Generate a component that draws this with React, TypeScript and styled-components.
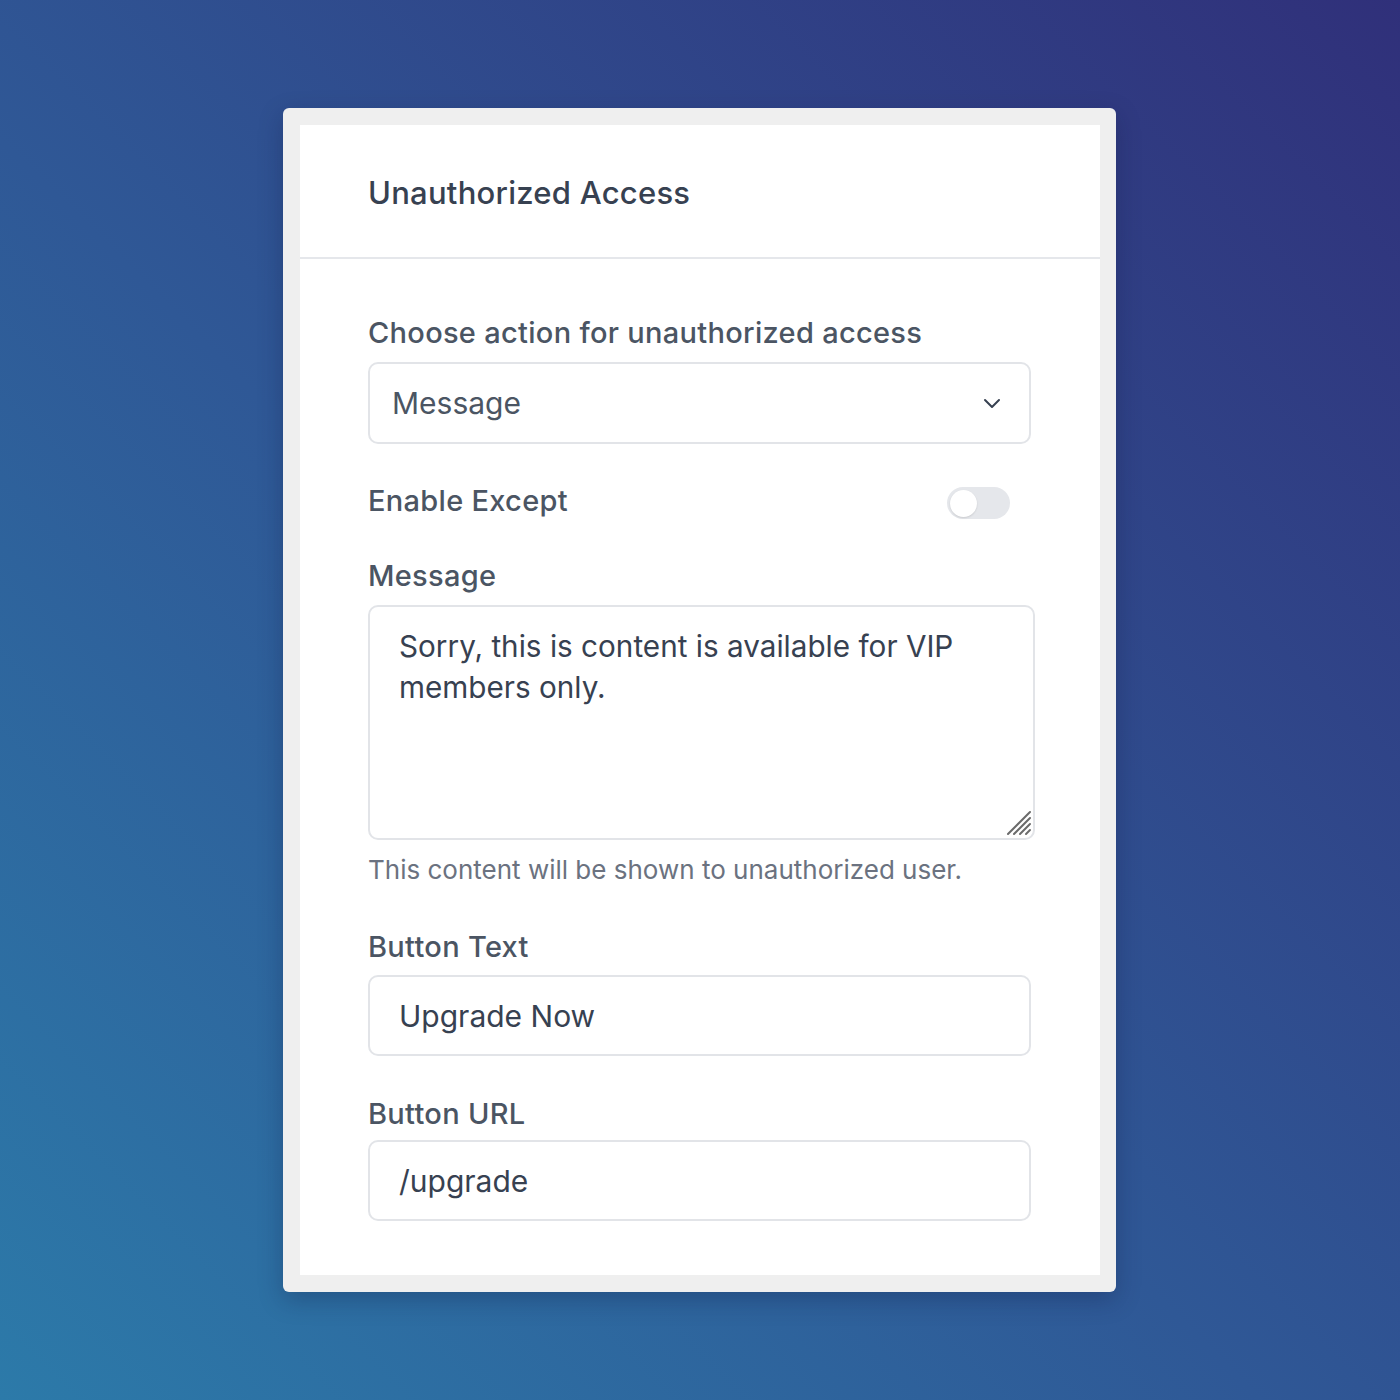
import type { FC } from "react";
import styled, { createGlobalStyle } from "styled-components";

const GlobalStyle = createGlobalStyle`
  html, body {
    margin: 0;
    padding: 0;
  }

  body {
    font-family: Inter, "Noto Sans", sans-serif;
    -webkit-font-smoothing: antialiased;
  }
`;

const Page = styled.div`
  width: 1400px;
  height: 1400px;
  box-sizing: border-box;
  padding-top: 108px;
  display: flex;
  justify-content: center;
  align-items: flex-start;
  background: linear-gradient(45deg, #2c7aa9 0%, #2f5896 45%, #30307a 100%);
`;

const Frame = styled.div`
  width: 833px;
  box-sizing: border-box;
  margin-left: -1px;
  padding: 17px 16px 17px 17px;
  background: #efefef;
  border-radius: 6px;
  box-shadow: 0 8px 24px rgba(15, 20, 60, 0.28);
`;

const Card = styled.div`
  background: #ffffff;
`;

const Header = styled.div`
  height: 134px;
  box-sizing: border-box;
  padding-left: 68px;
  padding-top: 2px;
  display: flex;
  align-items: center;
  border-bottom: 2px solid #e5e7eb;
`;

const Title = styled.h2`
  margin: 0;
  font-size: 31px;
  font-weight: 500;
  color: #374151;
  letter-spacing: 0.25px;
`;

const Body = styled.div`
  padding: 56px 69px 54px 68px;
  display: flex;
  flex-direction: column;
  gap: 39px;
`;

const Field = styled.div<{ $gap?: number; $top?: number }>`
  display: flex;
  flex-direction: column;
  gap: ${({ $gap }) => $gap ?? 11}px;
  margin-top: ${({ $top }) => $top ?? 0}px;
`;

const Label = styled.label`
  font-size: 29px;
  line-height: 36px;
  font-weight: 500;
  letter-spacing: 0.3px;
  color: #4b5563;
`;

const Select = styled.div`
  width: 663px;
  height: 82px;
  box-sizing: border-box;
  padding: 0 28px 0 22px;
  display: flex;
  align-items: center;
  justify-content: space-between;
  border: 2px solid #e2e4e8;
  border-radius: 10px;
  font-size: 30px;
  color: #4b5563;
`;

const ToggleRow = styled.div`
  height: 36px;
  display: flex;
  align-items: center;
  justify-content: space-between;
  padding-right: 21px;
`;

const Toggle = styled.div<{ $on?: boolean }>`
  width: 63px;
  height: 32px;
  margin-top: 4px;
  border-radius: 16px;
  background: ${({ $on }) => ($on ? "#4f46e5" : "#e5e7eb")};
  display: flex;
  align-items: center;
  padding: 0 3px;
  box-sizing: border-box;
  justify-content: ${({ $on }) => ($on ? "flex-end" : "flex-start")};
`;

const Knob = styled.span`
  width: 27px;
  height: 27px;
  border-radius: 50%;
  background: #ffffff;
  box-shadow: 0 1px 2px rgba(0, 0, 0, 0.12);
`;

const AreaWrap = styled.div`
  position: relative;
  width: 667px;
`;

const TextArea = styled.textarea`
  display: block;
  width: 100%;
  height: 235px;
  box-sizing: border-box;
  padding: 19px 29px;
  border: 2px solid #e2e4e8;
  border-radius: 10px;
  resize: none;
  font-family: Inter, "Noto Sans", sans-serif;
  font-size: 29.7px;
  line-height: 41px;
  color: #374151;
  outline: none;
`;

const Grip = styled.svg`
  position: absolute;
  right: 2px;
  bottom: 3px;
`;

const Help = styled.p`
  margin: 0;
  font-size: 26px;
  line-height: 34px;
  color: #6b7280;
`;

const Input = styled.input`
  width: 663px;
  height: 81px;
  box-sizing: border-box;
  padding: 0 29px;
  border: 2px solid #e2e4e8;
  border-radius: 10px;
  font-family: Inter, "Noto Sans", sans-serif;
  font-size: 30px;
  color: #374151;
  outline: none;
`;

const App: FC = () => {
  return (
    <>
      <GlobalStyle />
      <Page>
        <Frame>
          <Card>
            <Header>
              <Title>Unauthorized Access</Title>
            </Header>

            <Body>
              <Field>
                <Label>Choose action for unauthorized access</Label>
                <Select>
                  <span>Message</span>
                  <svg width="18" height="12" viewBox="0 0 18 12" fill="none">
                    <path
                      d="M2 3l7 7 7-7"
                      stroke="#374151"
                      strokeWidth="2"
                      strokeLinecap="round"
                      strokeLinejoin="round"
                    />
                  </svg>
                </Select>
              </Field>

              <ToggleRow>
                <Label>Enable Except</Label>
                <Toggle>
                  <Knob />
                </Toggle>
              </ToggleRow>

              <Field $gap={13}>
                <Field $gap={11}>
                  <Label>Message</Label>
                  <AreaWrap>
                    <TextArea
                      readOnly
                      defaultValue="Sorry, this is content is available for VIP members only."
                    />
                    <Grip width="28" height="28" viewBox="0 0 28 28">
                      <g stroke="#6b6b6b" strokeWidth="2" strokeLinecap="round">
                        <path d="M3 25L25 3" />
                        <path d="M9 25L25 9" />
                        <path d="M15 25L25 15" />
                        <path d="M21 25L25 21" />
                      </g>
                    </Grip>
                  </AreaWrap>
                </Field>
                <Help>This content will be shown to unauthorized user.</Help>
              </Field>

              <Field $gap={10} $top={3}>
                <Label>Button Text</Label>
                <Input readOnly defaultValue="Upgrade Now" />
              </Field>

              <Field $gap={8} $top={1}>
                <Label>Button URL</Label>
                <Input readOnly defaultValue="/upgrade" />
              </Field>
            </Body>
          </Card>
        </Frame>
      </Page>
    </>
  );
};

export default App;
